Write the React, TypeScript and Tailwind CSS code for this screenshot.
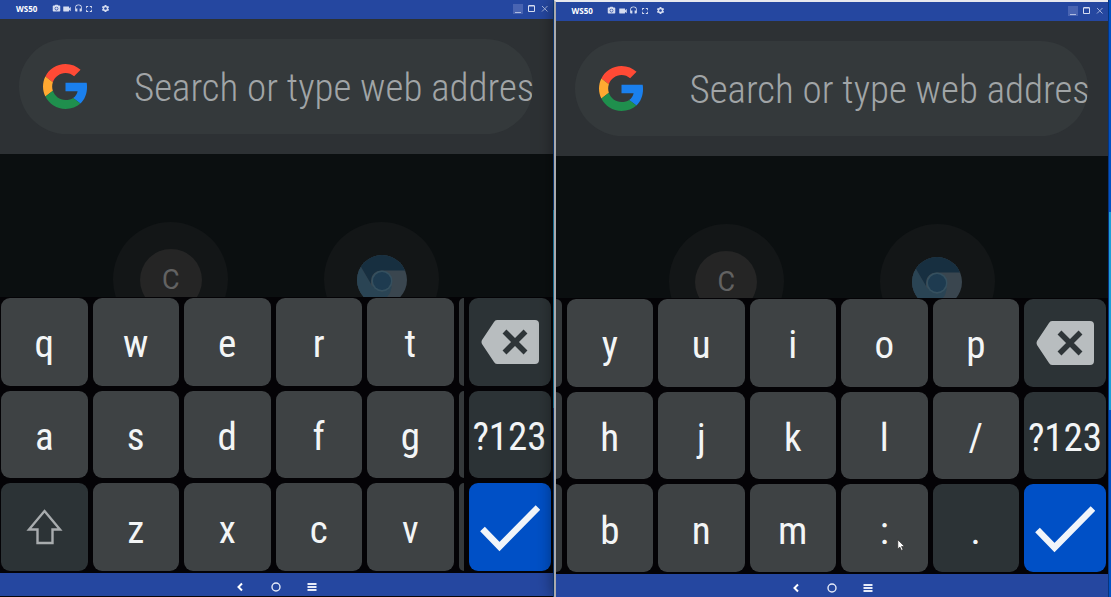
import React from 'react';
import clsx from 'clsx';
import { MdFullscreen, MdHeadset, MdPhotoCamera, MdSettings, MdVideocam } from 'react-icons/md';

const leftRows = [
  ['q', 'w', 'e', 'r', 't'],
  ['a', 's', 'd', 'f', 'g'],
  ['shift', 'z', 'x', 'c', 'v'],
];

const rightRows = [
  ['y', 'u', 'i', 'o', 'p'],
  ['h', 'j', 'k', 'l', '/'],
  ['b', 'n', 'm', ':', '.'],
];

const GoogleLogo = () => (
  <svg viewBox="0 0 48 48" className="size-[45px] shrink-0" aria-hidden="true">
    <path fill="#ff4a35" d="M24 9.5c3.54 0 6.71 1.22 9.21 3.6l6.85-6.85C35.9 2.38 30.47 0 24 0 14.62 0 6.51 5.38 2.56 13.22l7.98 6.19C12.43 13.72 17.74 9.5 24 9.5z" />
    <path fill="#1a80ee" d="M46.98 24.55c0-1.57-.15-3.09-.38-4.55H24v9.02h12.94c-.58 2.96-2.26 5.48-4.78 7.18l7.73 6c4.51-4.18 7.09-10.36 7.09-17.65z" />
    <path fill="#ffa931" d="M10.53 28.59c-.48-1.45-.76-2.99-.76-4.59s.27-3.14.76-4.59l-7.98-6.19C.92 16.46 0 20.12 0 24c0 3.88.92 7.54 2.56 10.78l7.97-6.19z" />
    <path fill="#1f8f4d" d="M24 48c6.48 0 11.93-2.13 15.89-5.81l-7.73-6c-2.15 1.45-4.92 2.3-8.16 2.3-6.26 0-11.57-4.22-13.47-9.91l-7.98 6.19C6.51 42.62 14.62 48 24 48z" />
  </svg>
);

const ChromiumLogo = () => (
  <svg viewBox="0 0 50 50" className="size-[50px] rounded-full" aria-hidden="true">
    <rect width="50" height="50" fill="#3a464f" />
    <path fill="#2a4454" d="M0 8 L5 14 L15 31 L25 37 L35 31 L33 38 L24 50 H0z" />
    <path fill="#172f40" d="M4 12 L14 29 Q13 16 25 15.5 H50 V0 H4z" />
    <circle cx="25" cy="26" r="10.5" fill="#35505f" />
    <circle cx="25" cy="26" r="9" fill="#1e3b50" />
  </svg>
);

const BackspaceIcon = () => (
  <svg viewBox="0 0 58 44" className="h-11 w-[58px]" aria-hidden="true">
    <path fill="#b8bdbf" d="M1 20 L13 2 Q14 0 16 0 H54 Q58 0 58 4 V40 Q58 44 54 44 H16 Q14 44 13 42 L1 24 Q0 22 1 20z" />
    <path stroke="#2e3538" strokeWidth="5.5" d="M23.5 11.5 L44.5 32.5 M44.5 11.5 L23.5 32.5" />
  </svg>
);

const CheckIcon = () => (
  <svg viewBox="0 0 60 48" className="h-12 w-[60px]" fill="none" aria-hidden="true">
    <path stroke="#f1f5fa" strokeWidth="6.5" d="M2.5 25 L19.5 42.5 L58 3.5" />
  </svg>
);

const ShiftIcon = () => (
  <svg viewBox="0 0 37 36" className="h-9 w-[37px]" fill="none" aria-hidden="true">
    <path stroke="#a8acae" strokeWidth="2.4" d="M18.5 2 L34 20.5 H26.5 V34 H11.5 V20.5 H3z" />
  </svg>
);

const Cursor = () => (
  <svg viewBox="0 0 9 13" className="absolute left-[56px] top-[55px] h-[13px] w-[9px]" aria-hidden="true">
    <path fill="#fff" stroke="#222" strokeWidth=".6" d="M.8.8 V10 L2.9 8.1 L4.4 11.4 L6 10.7 L4.5 7.5 H7.5z" />
  </svg>
);

const tools = [
  { label: 'Screenshot', icon: <MdPhotoCamera size={9} /> },
  { label: 'Record', icon: <MdVideocam size={10} /> },
  { label: 'Audio', icon: <MdHeadset size={9} /> },
  { label: 'Fullscreen', icon: <MdFullscreen size={12} /> },
];

const TitleBar = () => (
  <header className="flex h-[19px] shrink-0 items-center bg-[#2547a0] pb-[2px] pl-4 pr-1 text-[#d5dcf0]">
    <h1 className="w-[35px] font-['Open_Sans',sans-serif] text-[8px] font-bold leading-none text-white">WS50</h1>
    <div className="flex items-center gap-px">
      {tools.map(({ label, icon }) => (
        <button key={label} aria-label={label} className="flex w-[10px] justify-center">{icon}</button>
      ))}
      <button aria-label="Settings" className="ml-[5px] flex w-[10px] justify-center"><MdSettings size={9} /></button>
    </div>
    <div className="ml-auto flex items-center gap-1">
      <button aria-label="Minimize" className="bg-[#4964b2]">
        <svg viewBox="0 0 10 10" className="size-[10px]" stroke="#aebbe0"><path d="M2 8.5 H8" /></svg>
      </button>
      <button aria-label="Maximize">
        <svg viewBox="0 0 9 9" className="size-[9px]" fill="none" stroke="#d5dcf0"><path d="M1.5 2 H7.5 V7.5 H1.5z M1.5 1.5 H7.5" /></svg>
      </button>
      <button aria-label="Close">
        <svg viewBox="0 0 9 9" className="size-[9px]" stroke="#a3b2dc"><path d="M2 2 L7.5 7.5 M7.5 2 L2 7.5" /></svg>
      </button>
    </div>
  </header>
);

const NavBar = () => (
  <nav className="flex h-[23px] shrink-0 items-center justify-center bg-[#2547a0] pt-1">
    <button aria-label="Back" className="flex w-9 justify-center">
      <svg viewBox="0 0 10 10" className="size-[10px]" fill="none" stroke="#fff" strokeWidth="2"><path d="M7 1.5 L3.5 5 L7 8.5" /></svg>
    </button>
    <button aria-label="Home" className="flex w-9 justify-center">
      <svg viewBox="0 0 10 10" className="size-[10px]" fill="none" stroke="#e6ebf8" strokeWidth="1.4"><circle cx="5" cy="5" r="4" /></svg>
    </button>
    <button aria-label="Menu" className="flex w-9 justify-center">
      <svg viewBox="0 0 10 10" className="size-[10px]" stroke="#e6ebf8" strokeWidth="2"><path d="M.5 2 H9.5 M.5 5 H9.5 M.5 8 H9.5" /></svg>
    </button>
  </nav>
);

const Key = ({ label }: { label: string }) => (
  <button
    aria-label={label}
    className={clsx(
      'relative flex min-w-0 flex-1 items-center justify-center rounded-[9px] text-[39px] leading-none text-[#f3f5f6]',
      label === 'shift' || label === '.' ? 'bg-[#2c3336]' : 'bg-[#3e4244]',
      label !== 'shift' && 'pt-[6px]',
    )}
  >
    {label === 'shift' ? <ShiftIcon /> : label}
    {label === ':' && <Cursor />}
  </button>
);

const Keyboard = ({ rows, side }: { rows: string[][]; side: 'left' | 'right' }) => (
  <div
    className={clsx(
      "flex h-[276px] shrink-0 gap-[5px] bg-[#040306] pb-[2px] pr-[2px] pt-px font-['Roboto_Condensed',Roboto,sans-serif]",
      side === 'left' && 'pl-px',
    )}
  >
    <div className="grid min-w-0 flex-1 grid-rows-3 gap-[5px]">
      {rows.map((row) => (
        <div key={row[0]} className="flex gap-[5px]">
          {side === 'right' && <span className="w-[6px] rounded-r-[6px] bg-[#35393b]" />}
          {row.map((label) => (
            <Key key={label} label={label} />
          ))}
          {side === 'left' && <span className="w-[5px] rounded-l-[5px] bg-[#35393b]" />}
        </div>
      ))}
    </div>
    <div className="grid w-[82px] grid-rows-3 gap-[5px]">
      <button aria-label="Backspace" className="flex items-center justify-center rounded-[9px] bg-[#2c3336]">
        <BackspaceIcon />
      </button>
      <button className="flex items-center justify-center rounded-[9px] bg-[#2c3336] pt-[6px] text-[39px] leading-none text-[#f3f5f6]">
        ?123
      </button>
      <button aria-label="Done" className="flex items-center justify-center rounded-[9px] bg-[#0050c6] pt-[2px]">
        <CheckIcon />
      </button>
    </div>
  </div>
);

const DeviceWindow = ({ rows, side }: { rows: string[][]; side: 'left' | 'right' }) => (
  <section className="flex min-w-0 flex-1 flex-col">
    <TitleBar />
    {/* Address bar */}
    <div className="shrink-0 bg-[#2d3134] pb-5 pl-[19px] pr-5 pt-5">
      <label className="flex h-[95px] items-center gap-[46px] overflow-hidden rounded-full bg-[#34393b] pl-6">
        <GoogleLogo />
        <input
          type="text"
          aria-label="Search or type web address"
          placeholder="Search or type web addres"
          className="min-w-0 flex-1 bg-transparent pt-[3px] font-['Roboto_Condensed',Roboto,sans-serif] text-[39px] font-light text-[#a1a5a7] outline-none placeholder:text-[#a1a5a7]"
        />
      </label>
    </div>
    {/* Dimmed shortcuts, cut off by the keyboard */}
    <main className="flex min-h-0 flex-1 items-start justify-center gap-24 overflow-hidden bg-[#0b0f10] pt-[68px]">
      <a href="#" className="flex size-[115px] items-center justify-center rounded-full bg-[#131617]">
        <span className="flex size-[62px] items-center justify-center rounded-full bg-[#252525] pt-[2px] font-[Roboto,sans-serif] text-[27px] leading-none text-[#626262]">
          C
        </span>
      </a>
      <a href="#" aria-label="Chromium" className="flex size-[115px] items-center justify-center rounded-full bg-[#131617]">
        <ChromiumLogo />
      </a>
    </main>
    <Keyboard rows={rows} side={side} />
    <NavBar />
  </section>
);

const App = () => (
  <div className="flex h-screen min-h-[500px] overflow-hidden bg-[#06080a]">
    <div className="flex min-w-0 flex-1 pb-px">
      <DeviceWindow rows={leftRows} side="left" />
    </div>
    <div className="flex w-px flex-col bg-[#0c428c]">
      <div className="mt-[210px] h-[198px] bg-[#1787b8]" />
    </div>
    <div className="flex min-w-0 flex-1 border-l-2 border-t-2 border-l-[#a9aaad] border-t-[#e8e9ee] shadow-[0_0_16px_rgba(0,0,0,0.5)]">
      <DeviceWindow rows={rightRows} side="right" />
    </div>
    <div className="flex w-[3px] flex-col border-l border-[#07347e] bg-[#0052c4]">
      <div className="mt-[212px] h-[198px] bg-[#1d9fd8]" />
    </div>
  </div>
);

export default App;
